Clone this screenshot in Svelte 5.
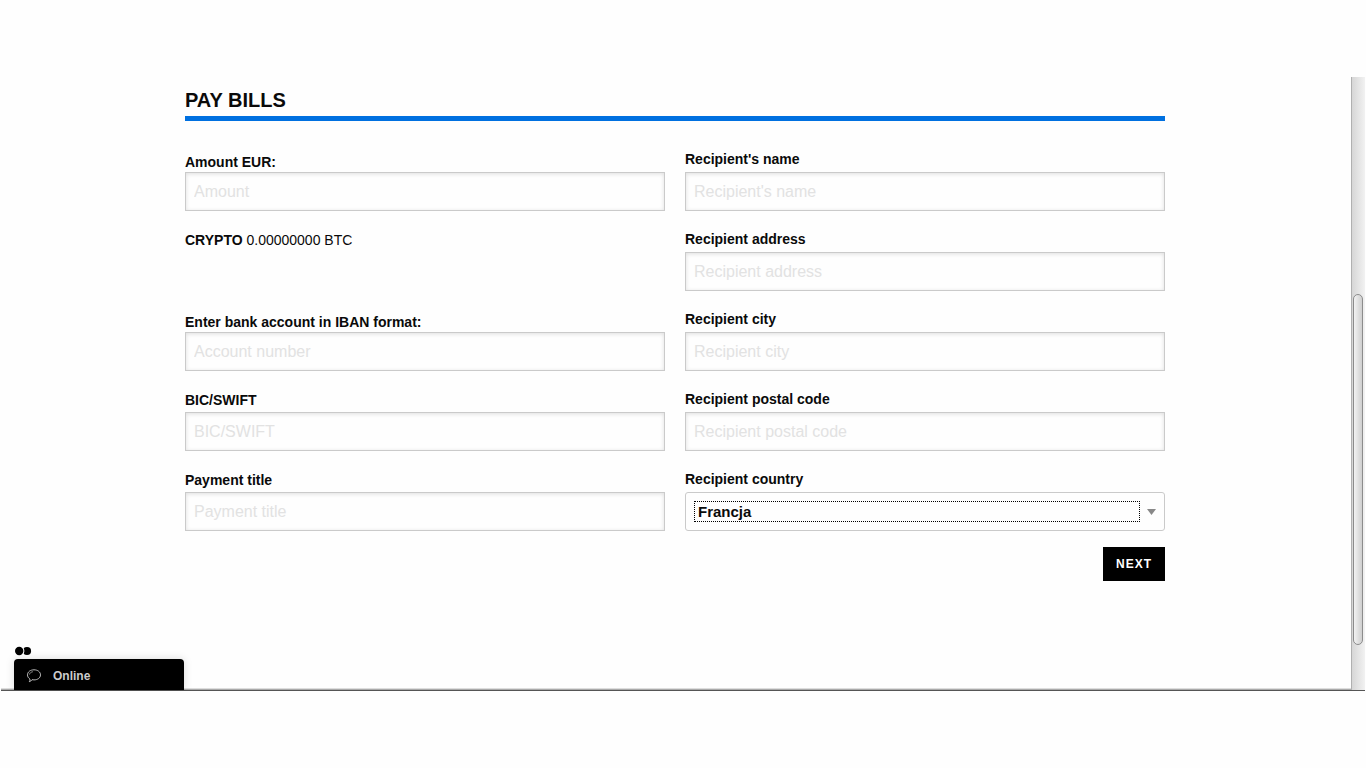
<script lang="ts">
  let amount = $state("");
  let account = $state("");
  let bic = $state("");
  let title = $state("");
  let country = $state("Francja");
  let crypto = "0.00000000";

  let recipient = $state([
    { id: "name", label: "Recipient's name", value: "" },
    { id: "address", label: "Recipient address", value: "" },
    { id: "city", label: "Recipient city", value: "" },
    { id: "postal", label: "Recipient postal code", value: "" },
  ]);

  function submit(e: SubmitEvent) {
    e.preventDefault();
  }
</script>

<div class="window">
  <div class="view">
    <main>
      <h1>Pay bills</h1>
      <form onsubmit={submit}>
        <div class="columns">
          <div class="column payment">
            <div class="field">
              <label class="low" for="amount">Amount EUR:</label>
              <input id="amount" type="text" placeholder="Amount" bind:value={amount} />
            </div>
            <p class="field crypto"><strong>CRYPTO</strong> {crypto} BTC</p>
            <div class="field">
              <label class="low" for="account">Enter bank account in IBAN format:</label>
              <input id="account" type="text" placeholder="Account number" bind:value={account} />
            </div>
            <div class="field">
              <label for="bic">BIC/SWIFT</label>
              <input id="bic" type="text" placeholder="BIC/SWIFT" bind:value={bic} />
            </div>
            <div class="field">
              <label for="title">Payment title</label>
              <input id="title" type="text" placeholder="Payment title" bind:value={title} />
            </div>
          </div>

          <div class="column">
            {#each recipient as item (item.id)}
              <div class="field">
                <label for={item.id}>{item.label}</label>
                <input id={item.id} type="text" placeholder={item.label} bind:value={item.value} />
              </div>
            {/each}
            <div class="field">
              <label for="country">Recipient country</label>
              <div class="select">
                <select id="country" bind:value={country}>
                  <option>Francja</option>
                </select>
                <svg width="9" height="6" viewBox="0 0 9 6" aria-hidden="true">
                  <path d="M0 0h9L4.5 6z" fill="#888" />
                </svg>
              </div>
            </div>
          </div>
        </div>
        <div class="actions">
          <button type="submit" class="next">NEXT</button>
        </div>
      </form>
    </main>

    <aside>
      <svg class="dots" width="18" height="10" viewBox="0 0 18 10" aria-hidden="true">
        <circle cx="13" cy="5" r="4.1" />
        <circle cx="5.400" cy="5" r="5" fill="#fefefe" />
        <circle cx="5.200" cy="5" r="4.200" />
      </svg>
      <button type="button" class="chat">
        <svg width="16" height="14" viewBox="0 0 16 14" fill="none" stroke="#ccc" aria-hidden="true">
          <path d="M3.900 10C2.400 9 1.500 7.600 1.500 5.900 1.500 2.900 4.400.8 8 .8s6.500 2.100 6.500 5.100-2.900 5-6.500 5c-.7 0-1.400-.1-2-.2-.6 1-1.500 1.700-2.700 2 .6-.8.8-1.700.6-2.700z" stroke-width=".9" />
          <path d="M3.500 5.500C3.700 4.100 5 3 6.900 2.700" stroke-width=".7" />
        </svg>
        Online
      </button>
    </aside>
  </div>
  <div class="scrollbar"><div class="thumb"></div></div>
</div>
<div class="edge"></div>

<style>
  :global(body) {
    background: #fefefe;
    color: #0a0a0a;
    font-family: "Liberation Sans", Arial, sans-serif;
    font-size: 14px;
    line-height: 20px;
  }

  .window {
    display: flex;
    margin: 77px 1px 0 0;
  }

  .view {
    flex: 1;
    padding: 11px 1px 0 0;
  }

  main {
    max-width: 980px;
    margin: 0 auto;
  }

  h1 {
    margin: 0 0 28px;
    padding-bottom: 4px;
    border-bottom: 5px solid #0070e0;
    font-size: 20px;
    line-height: 24px;
    text-transform: uppercase;
  }

  .columns {
    display: grid;
    grid-template-columns: 1fr 1fr;
    gap: 20px;
  }

  .column {
    display: grid;
    grid-auto-rows: 62px;
    gap: 18px;
  }

  .field {
    display: flex;
    flex-direction: column;
  }

  label {
    padding-bottom: 3px;
    font-weight: bold;
  }

  .payment label {
    padding: 1px 0 2px;
  }

  .payment label.low {
    padding: 3px 0 0;
  }

  .crypto {
    display: block;
    margin: 0;
    padding-top: 1px;
  }

  input,
  .select {
    box-sizing: border-box;
    width: 100%;
    height: 39px;
    border: 1px solid #cacaca;
    background: #fefefe;
  }

  input {
    padding: 8px;
    border-radius: 0;
    box-shadow: inset 0 1px 4px rgba(10, 10, 10, 0.13);
    color: #0a0a0a;
    font-family: inherit;
    font-size: 16px;
  }

  input::placeholder {
    color: #e2e2e2;
  }

  .select {
    display: flex;
    align-items: center;
    gap: 7px;
    padding: 0 8px;
    border-radius: 3px;
  }

  select {
    appearance: none;
    flex: 1;
    height: 21px;
    padding: 0 3px;
    border: 1px dotted #000;
    border-radius: 0;
    background: none;
    color: #0a0a0a;
    font-family: inherit;
    font-size: 15px;
    font-weight: bold;
    outline: none;
  }

  .actions {
    display: flex;
    justify-content: flex-end;
    margin-top: 16px;
  }

  .next {
    height: 34px;
    padding: 0 13px;
    border: none;
    background: #000;
    color: #fff;
    cursor: pointer;
    font-family: inherit;
    font-size: 12px;
    font-weight: bold;
    letter-spacing: 1px;
  }

  .next:hover {
    background: #222;
  }

  aside {
    margin: 65px 0 0 14px;
  }

  .dots {
    display: block;
    margin-bottom: 3px;
  }

  .chat {
    display: flex;
    align-items: center;
    gap: 11px;
    position: relative;
    width: 170px;
    height: 31px;
    padding: 2px 12px 0;
    border: none;
    border-radius: 4px 4px 0 0;
    background: #000;
    box-shadow: 0 0 8px rgba(0, 0, 0, 0.15);
    color: #ccc;
    cursor: pointer;
    font-family: inherit;
    font-size: 12px;
    font-weight: bold;
  }

  .scrollbar {
    display: grid;
    grid-template-rows: 217fr 351fr 45fr;
    box-sizing: border-box;
    width: 14px;
    padding: 0 2px 0 1px;
    border-left: 1px solid #b0b0b0;
    background: linear-gradient(to right, #d6d6d6, #f2f2f2);
  }

  .thumb {
    grid-row: 2;
    border: 1px solid #8c8c8c;
    border-radius: 5px;
    background: linear-gradient(to right, #f2f2f2, #cfcfcf);
  }

  .edge {
    height: 3px;
    margin: -2px 1px 0;
    background: linear-gradient(#ddd 1px, #aaa 1px 2px, #555 2px);
  }
</style>
